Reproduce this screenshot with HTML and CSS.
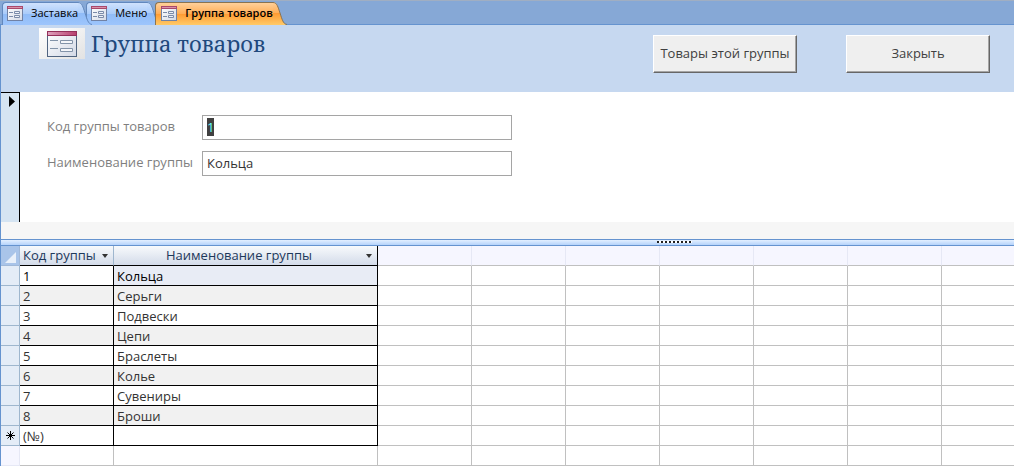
FILE: index.html
```html
<!DOCTYPE html>
<html lang="ru">
<head>
<meta charset="utf-8">
<title>Группа товаров</title>
<link rel="stylesheet" href="styles.css">
</head>
<body>
<svg class="defs" width="0" height="0" aria-hidden="true">
  <defs>
    <linearGradient id="blue" x1="0" y1="0" x2="0" y2="1">
      <stop offset="0" stop-color="#cfe2fd"/><stop offset=".48" stop-color="#aaccfa"/><stop offset=".5" stop-color="#90bcf8"/><stop offset="1" stop-color="#9dc5fc"/>
    </linearGradient>
    <linearGradient id="orange" x1="0" y1="0" x2="0" y2="1">
      <stop offset="0" stop-color="#ffd09a"/><stop offset=".48" stop-color="#ffae57"/><stop offset=".5" stop-color="#ff9b32"/><stop offset="1" stop-color="#ffca68"/>
    </linearGradient>
    <linearGradient id="paper" x1="0" y1="0" x2="1" y2="1">
      <stop offset="0" stop-color="#ffffff"/><stop offset="1" stop-color="#d3d9e6"/>
    </linearGradient>
    <linearGradient id="mat" x1="0" y1="0" x2="1" y2="1">
      <stop offset="0" stop-color="#ffffff"/><stop offset="1" stop-color="#e2e2e2"/>
    </linearGradient>
    <linearGradient id="rose" x1="0" y1="0" x2="1" y2="0">
      <stop offset="0" stop-color="#dda0bb"/><stop offset="1" stop-color="#b8406e"/>
    </linearGradient>
    <symbol id="form-small" viewBox="0 0 16 15">
      <rect x=".5" y=".5" width="15" height="14" fill="url(#paper)" stroke="#7182a5"/>
      <rect x="0" y="0" width="16" height="3" fill="#a9486b"/>
      <rect x="1" y="1" width="14" height="1" fill="#d891a8"/>
      <path d="M2 6.5h4M2 10.5h4" stroke="#7b8ba9"/>
      <path d="M7.5 5.5h5v2h-5zM7.5 9.5h5v2h-5z" fill="#eef2f9" stroke="#7b8ba9"/>
    </symbol>
  </defs>
</svg>
<nav class="tabs" role="tablist">
  <button class="tab" role="tab" type="button">
    <svg class="tab-icon"><use href="#form-small"/></svg><span>Заставка</span>
    <svg class="tab-end" viewBox="0 0 14 23"><path d="M0 0C4 0 5 5 7 11S10 22 14 23H0z" fill="url(#blue)"/><path d="M0 .5C4 .5 5 5 7 11S10 22 14 22.5" fill="none" stroke="#6288bd"/></svg>
  </button>
  <button class="tab" role="tab" type="button">
    <svg class="tab-icon"><use href="#form-small"/></svg><span>Меню</span>
    <svg class="tab-end" viewBox="0 0 14 23"><path d="M0 0C4 0 5 5 7 11S10 22 14 23H0z" fill="url(#blue)"/><path d="M0 .5C4 .5 5 5 7 11S10 22 14 22.5" fill="none" stroke="#6288bd"/></svg>
  </button>
  <button class="tab active" role="tab" type="button" aria-selected="true">
    <svg class="tab-icon"><use href="#form-small"/></svg><span>Группа товаров</span>
    <svg class="tab-end" viewBox="0 0 14 23"><path d="M0 0C4 0 5 5 7 11S10 22 14 23H0z" fill="url(#orange)"/><path d="M0 .5C4 .5 5 5 7 11S10 22 14 22.5" fill="none" stroke="#8a7350"/></svg>
  </button>
</nav>
<main class="window">
  <header class="header">
    <svg class="logo" viewBox="0 0 46 31" aria-hidden="true">
      <rect width="46" height="31" fill="url(#mat)"/>
      <rect x="8.500" y="3.500" width="29" height="25" fill="url(#paper)" stroke="#506480"/>
      <rect x="8" y="3" width="30" height="5" fill="#94305a"/>
      <rect x="9" y="4" width="28" height="3" fill="url(#rose)"/>
      <path d="M11 12.500h8M11 20.500h8" stroke="#8293a9"/>
      <path d="M21.500 12.500h12v3h-12zM21.500 20.500h12v3h-12z" fill="#f4f6fa" stroke="#8293a9"/>
    </svg>
    <h1 class="title">Группа товаров</h1>
    <div class="actions">
      <button class="command" type="button">Товары этой группы</button>
      <button class="command" type="button">Закрыть</button>
    </div>
  </header>
  <form class="record">
    <div class="selector"><svg width="6" height="11" viewBox="0 0 6 11"><path d="M0 0L6 5.500 0 11z"/></svg></div>
    <div class="fields">
      <label for="code">Код группы товаров</label>
      <input id="code" type="text" value="1" autocomplete="off">
      <label for="name">Наименование группы</label>
      <input id="name" type="text" value="Кольца" autocomplete="off">
    </div>
  </form>
  <div class="footer"></div>
  <div class="splitter"><span class="grip"></span></div>
  <table class="sheet">
    <colgroup><col class="c-select"><col class="c-code"><col class="c-name"><col class="c-blank"><col class="c-blank"><col class="c-blank"><col class="c-blank"><col class="c-blank"><col class="c-blank"><col></colgroup>
    <thead>
      <tr><th class="corner"><svg width="11" height="11" viewBox="0 0 11 11"><path d="M11 0V11H0z" fill="#e9f0fa"/></svg></th>
      <th class="head"><div><span>Код группы</span><svg width="6" height="4" viewBox="0 0 6 4"><path d="M0 0h6L3 4z" fill="#333"/></svg></div></th>
      <th class="head last"><div><span>Наименование группы</span><svg width="6" height="4" viewBox="0 0 6 4"><path d="M0 0h6L3 4z" fill="#333"/></svg></div></th>
      <td></td><td></td><td></td><td></td><td></td><td></td><td></td></tr>
    </thead>
    <tbody>
      <tr class="current"><th></th><td class="cell">1</td><td class="cell">Кольца</td><td></td><td></td><td></td><td></td><td></td><td></td><td></td></tr>
      <tr><th></th><td class="cell">2</td><td class="cell">Серьги</td><td></td><td></td><td></td><td></td><td></td><td></td><td></td></tr>
      <tr><th></th><td class="cell">3</td><td class="cell">Подвески</td><td></td><td></td><td></td><td></td><td></td><td></td><td></td></tr>
      <tr><th></th><td class="cell">4</td><td class="cell">Цепи</td><td></td><td></td><td></td><td></td><td></td><td></td><td></td></tr>
      <tr><th></th><td class="cell">5</td><td class="cell">Браслеты</td><td></td><td></td><td></td><td></td><td></td><td></td><td></td></tr>
      <tr><th></th><td class="cell">6</td><td class="cell">Колье</td><td></td><td></td><td></td><td></td><td></td><td></td><td></td></tr>
      <tr><th></th><td class="cell">7</td><td class="cell">Сувениры</td><td></td><td></td><td></td><td></td><td></td><td></td><td></td></tr>
      <tr><th></th><td class="cell">8</td><td class="cell">Броши</td><td></td><td></td><td></td><td></td><td></td><td></td><td></td></tr>
      <tr><th><svg width="9" height="9" viewBox="0 0 9 9"><path d="M4.500 0v9M0 4.500h9M1.500 1.500l6 6M7.500 1.500l-6 6" stroke="#000"/></svg></th><td class="cell">(№)</td><td class="cell"></td><td></td><td></td><td></td><td></td><td></td><td></td><td></td></tr>
      <tr class="empty"><th></th><td></td><td></td><td></td><td></td><td></td><td></td><td></td><td></td><td></td></tr>
    </tbody>
  </table>
</main>
<script src="script.js"></script>
</body>
</html>
```
FILE: styles.css
```css
* { box-sizing: border-box; }
body { margin: 0; background: #fff; color: #333; font: 13px/18px "Open Sans", "Noto Sans", sans-serif; }
button, input { font: inherit; color: inherit; }
svg { display: block; flex: none; }
.defs { position: absolute; }

.tabs { display: flex; height: 25px; padding: 1px 0 0 2px; background: #86a8d6; border-top: 1px solid #a0aec2; border-bottom: 1px solid #6593cf; }
.tab { position: relative; z-index: 2; display: flex; align-items: center; gap: 8px; height: 23px; margin: 0 8px 0 0; padding: 0 0 2px 4px; border: 0 solid #6288bd; border-width: 1px 0 0 1px; border-radius: 4px 0 0 0; background: linear-gradient(#cfe2fd, #aaccfa 48%, #90bcf8 50%, #9dc5fc); color: #000; font-size: 11px; white-space: nowrap; }
.tab + .tab { z-index: 1; }
.tab.active { z-index: 3; padding-left: 5px; border-color: #8a7350; background: linear-gradient(#ffd09a, #ffae57 48%, #ff9b32 50%, #ffca68); font-weight: 600; }
.tab-icon { width: 16px; height: 15px; }
.tab-end { position: absolute; left: 100%; top: -1px; width: 14px; height: 23px; }

.window { border-left: 1px solid #6593cf; }
.header { display: flex; align-items: flex-start; height: 67px; padding: 3px 24px 0 38px; background: #c6d8f0; }
.logo { width: 46px; height: 31px; }
.title { margin: 0 0 0 6px; color: #1f497d; font: 22px/30px "Noto Serif", "Liberation Serif", serif; white-space: nowrap; }
.actions { display: flex; gap: 49px; margin: 7px 0 0 auto; }
.command { width: 144px; height: 38px; padding: 0 0 2px; background: #efefef; border: 1px solid #fff; border-right-color: #666; border-bottom-color: #666; box-shadow: inset -1px -1px #a5a5a5; color: #404040; white-space: nowrap; }

.record { display: flex; height: 130px; }
.selector { width: 19px; padding: 3px 0 0 8px; background: #d5e4f2; border-top: 1px solid #000; border-right: 1px solid #000; }
.fields { display: grid; flex: 1; grid-template-columns: 155px minmax(0, 310px); grid-auto-rows: 25px; row-gap: 11px; align-content: start; align-items: center; padding: 23px 20px 0 27px; color: #7f7f7f; white-space: nowrap; }
.fields label { padding-bottom: 3px; }
.fields input { width: 100%; height: 25px; padding: 0 4px 2px; border: 1px solid #a5a5a5; border-radius: 0; background: #fff; color: #333; outline: none; }
.fields input::selection { background: #404040; color: #6ff; }
.footer { height: 17px; background: #f6f6f6; }
.splitter { height: 7px; padding: 1px 0 0 656px; border: 1px solid #6593cf; border-width: 1px 0; background: linear-gradient(#e3efff, #b5d3fb); }
.grip { display: block; width: 35px; height: 2px; background: repeating-linear-gradient(90deg, #222 0 2px, #fff 2px 4px); }

.sheet { width: 100%; table-layout: fixed; border-collapse: separate; border-spacing: 0; }
.c-select { width: 19px; }
.c-code { width: 94px; }
.c-name { width: 264px; }
.c-blank { width: 94px; }
.sheet tr { height: 20px; }
.sheet th, .sheet td { height: 20px; padding: 0; border: 0 solid #c0c0c0; border-width: 0 1px 1px 0; font-weight: 400; line-height: 19px; text-align: left; white-space: nowrap; }
.sheet td:last-child { border-right: 0; }
.sheet thead td { background: #f6f6ff; border-right-color: #e6e8f5; }
.sheet thead .corner { padding: 4px 0 0 4px; background: #a9c4e9; border-color: #a0b8d8; }
.sheet thead .head { background: linear-gradient(#f8fafc, #d3dbe9); border-bottom-color: #000; border-right-color: #9eb6ce; color: #1e395b; }
.sheet thead .last { border-right-color: #000; }
.head div { display: flex; align-items: center; padding: 0 5px 0 3px; }
.head span { flex: 1; }
.last span { padding-right: 5px; text-align: center; }
.sheet tbody th { background: #e4ecf7; border-color: #9eb6ce; }
.sheet tbody th svg { margin-left: 5px; }
.sheet .cell { padding: 2px 0 0 3px; border-color: #000; line-height: 17px; }
.sheet tbody tr:nth-child(even) .cell { background: #f1f1f1; }
.sheet .current .cell { color: #000; }
.sheet .current .cell + .cell { background: #e8ecf5; }
.sheet .empty th { background: #f6f6ff; border-color: #e6e8f5; }
```
FILE: script.js
```js
const code = document.getElementById('code');
code.focus();
code.select();
```
